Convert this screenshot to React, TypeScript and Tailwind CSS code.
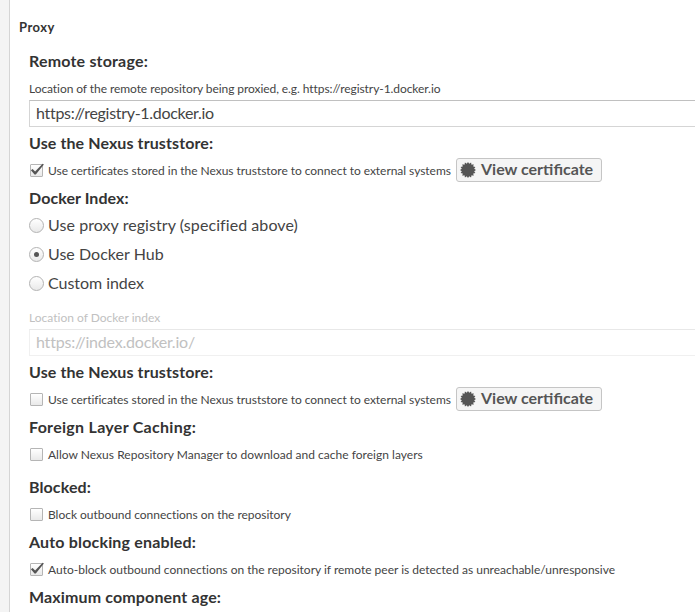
import type { ReactNode } from "react";

function Heading({ children, className }: { children: ReactNode; className: string }) {
  return <h3 className={`h-5 text-base leading-[18px] font-bold text-[#333] ${className}`}>{children}</h3>;
}

function Check({ checked = false }: { checked?: boolean }) {
  return (
    <span className="relative ml-px block h-[13px] w-[13px] shrink-0 rounded-[1px] border border-[#b5b5b5] bg-linear-to-b from-white to-[#e9e9e9]">
      {checked && (
        <svg className="absolute -top-[2px] -left-px" width="15" height="14" viewBox="0 0 15 14">
          <path d="M0.9 7.2 L2.6 6 L5.1 8.6 L12.6 0.7 L13.9 1.5 L5.8 11.4 L4.5 11.4 Z" fill="#555" />
        </svg>
      )}
    </span>
  );
}

function CheckRow({ checked, className, tracking, button, children }: { checked?: boolean; className: string; tracking: string; button?: boolean; children: ReactNode }) {
  return (
    <div className={`flex h-[25px] items-center ${className}`}>
      <Check checked={checked} />
      <span className={`ml-[5px] text-xs leading-[18px] ${tracking} ${button ? "w-[408px]" : ""}`}>{children}</span>
      {button && <CertButton />}
    </div>
  );
}

function Seal() {
  const n = 16;
  const pts = Array.from({ length: n * 2 }, (_, i) => {
    const r = i % 2 ? 6.3 : 8;
    const a = (i * Math.PI) / n;
    return `${(8 + r * Math.sin(a)).toFixed(2)},${(8 - r * Math.cos(a)).toFixed(2)}`;
  }).join(" ");
  return (
    <svg width="16" height="16" viewBox="0 0 16 16" className="shrink-0">
      <polygon points={pts} fill="#555" />
    </svg>
  );
}

function CertButton() {
  return (
    <button className="-mt-px flex h-6 w-[146px] shrink-0 items-center rounded-[3px] border border-[#c5c5c5] bg-[#f5f5f5] pl-[3px] text-base font-bold text-[#555]">
      <Seal />
      <span className="ml-[5px] h-5 leading-[18px]">View certificate</span>
    </button>
  );
}

function Radio({ selected = false, tracking, children }: { selected?: boolean; tracking: string; children: ReactNode }) {
  return (
    <div className="flex h-[29px] items-center">
      <span className="flex h-[15px] w-[15px] shrink-0 items-center justify-center rounded-full border border-[#b3b3b3] bg-linear-to-b from-white to-[#e9e9e9]">
        {selected && <span className="h-[5px] w-[5px] rounded-full bg-[#555]" />}
      </span>
      <span className={`ml-1 h-5 text-base leading-[18px] ${tracking}`}>{children}</span>
    </div>
  );
}

export default function App() {
  return (
    <div className="flex h-[612px] w-[695px] overflow-hidden bg-white font-['Lato',sans-serif] whitespace-nowrap text-[#444]">
      <aside className="w-[10px] shrink-0 border-r border-[#d5d5d5] bg-[#f4f4f4]" />
      <main className="min-w-0 flex-1 pt-[18px]">
        <h2 className="ml-[9px] h-5 text-[13px] leading-[18px] font-bold tracking-[0.5px] text-[#333]">Proxy</h2>
        <section className="ml-[19px]">
          <Heading className="mt-[14px] tracking-[0.19px]">Remote storage:</Heading>
          <p className="mt-2 h-[18px] text-xs leading-[18px] tracking-[-0.07px]">Location of the remote repository being proxied, e.g. https://registry-1.docker.io</p>
          <div className="mt-[2px] h-[27px] border border-r-0 border-[#d5d5d5] border-t-[#c0c0c0] pl-[6px] text-base leading-[23px] tracking-[-0.3px]">https://registry-1.docker.io</div>
          <Heading className="mt-[7px] tracking-[0.1px]">Use the Nexus truststore:</Heading>
          <CheckRow className="mt-1" checked button tracking="tracking-[-0.04px]">Use certificates stored in the Nexus truststore to connect to external systems</CheckRow>
          <Heading className="mt-[6px] tracking-[0.07px]">Docker Index:</Heading>
          <div className="mt-[2px]">
            <Radio tracking="tracking-[0.07px]">Use proxy registry (specified above)</Radio>
            <Radio selected tracking="tracking-[0.03px]">Use Docker Hub</Radio>
            <Radio tracking="tracking-[-0.04px]">Custom index</Radio>
          </div>
          <p className="mt-[11px] h-[18px] text-xs leading-[18px] tracking-[0.01px] text-[#c1c1c1]">Location of Docker index</p>
          <div className="mt-[2px] h-[27px] border border-r-0 border-[#f0f0f0] border-t-[#e8e8e8] pl-[6px] text-base leading-[23px] tracking-[-0.2px] text-[#c1c1c1]">https://index.docker.io/</div>
          <Heading className="mt-[7px] tracking-[0.1px]">Use the Nexus truststore:</Heading>
          <CheckRow className="mt-1" button tracking="tracking-[-0.04px]">Use certificates stored in the Nexus truststore to connect to external systems</CheckRow>
          <Heading className="mt-[6px] tracking-[0.29px]">Foreign Layer Caching:</Heading>
          <CheckRow className="mt-1" tracking="tracking-[0.02px]">Allow Nexus Repository Manager to download and cache foreign layers</CheckRow>
          <Heading className="mt-[11px] tracking-[0.1px]">Blocked:</Heading>
          <CheckRow className="mt-1" tracking="tracking-[-0.03px]">Block outbound connections on the repository</CheckRow>
          <Heading className="mt-[6px] tracking-[0.17px]">Auto blocking enabled:</Heading>
          <CheckRow className="mt-1" checked tracking="tracking-[-0.005px]">Auto-block outbound connections on the repository if remote peer is detected as unreachable/unresponsive</CheckRow>
          <Heading className="mt-[6px] tracking-[0.14px]">Maximum component age:</Heading>
        </section>
      </main>
    </div>
  );
}
